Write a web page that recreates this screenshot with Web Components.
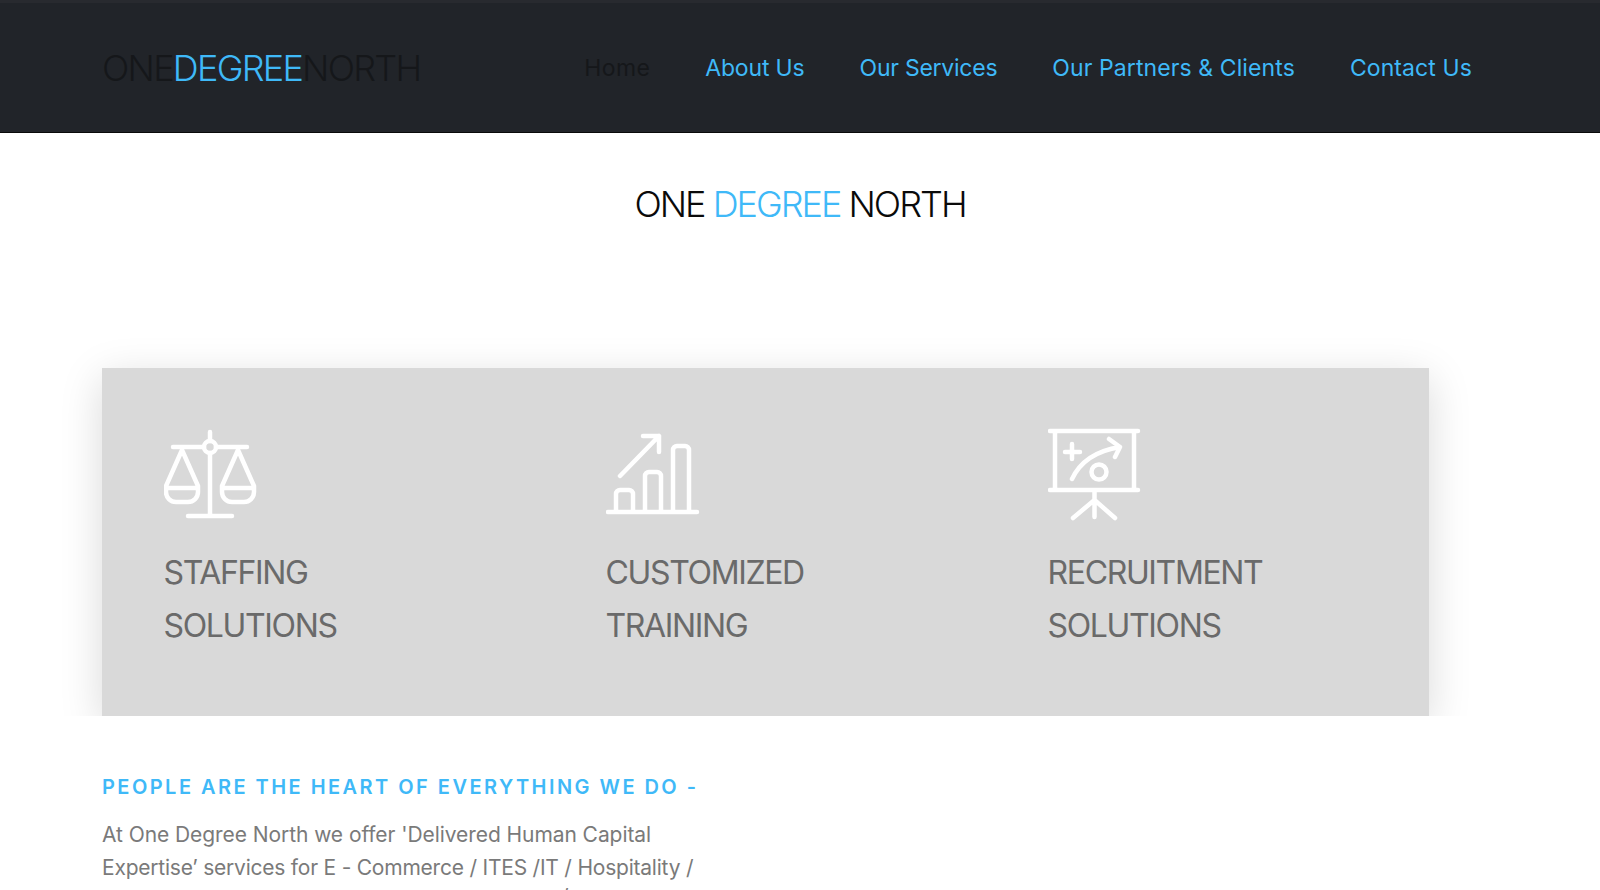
<!DOCTYPE html>
<html>
<head>
<meta charset="utf-8">
<title>One Degree North</title>
<style>
  html, body { margin: 0; height: 890px; overflow: hidden; background: #fff; }
  body { font-family: Inter, "Liberation Sans", sans-serif; }
</style>
</head>
<body>
<site-header></site-header>
<page-title></page-title>
<services-panel>
  <service-card line1="STAFFING" line2="SOLUTIONS" icon="scales"></service-card>
  <service-card line1="CUSTOMIZED" line2="TRAINING" icon="chart"></service-card>
  <service-card line1="RECRUITMENT" line2="SOLUTIONS" icon="board"></service-card>
</services-panel>
<intro-text></intro-text>

<script>
class SiteHeader extends HTMLElement {
  constructor() {
    super();
    this.attachShadow({ mode: "open" });
    this.shadowRoot.innerHTML = `
      <style>
        :host {
          display: flex;
          align-items: center;
          justify-content: space-between;
          box-sizing: border-box;
          height: 133px;
          padding: 0 128px 0 102px;
          background: #212429;
          border-top: 3px solid #282a2f;
          border-bottom: 1px solid #0a0a0a;
        }
        .logo {
          font-size: 36px;
          letter-spacing: -1.75px;
          color: #15171a;
          font-weight: 300;
        }
        .logo b { font-weight: 300; color: #3fb9f8; }
        nav { display: flex; gap: 55px; font-size: 23px; font-weight: 400; letter-spacing: .1px; }
        a { color: #3fb9f8; text-decoration: none; }
        a.current { color: #15171a; letter-spacing: .35px; }
        a.tight { letter-spacing: -.15px; }
        a.tighter { letter-spacing: -.25px; }
      </style>
      <div class="logo">ONE<b>DEGREE</b>NORTH</div>
      <nav>
        <a class="current" href="#">Home</a>
        <a class="tight" href="#">About Us</a>
        <a class="tighter" href="#">Our Services</a>
        <a href="#">Our Partners &amp; Clients</a>
        <a href="#">Contact Us</a>
      </nav>
    `;
  }
}

class PageTitle extends HTMLElement {
  constructor() {
    super();
    this.attachShadow({ mode: "open" });
    this.shadowRoot.innerHTML = `
      <style>
        :host {
          display: block;
          height: 139px;
          padding-top: 48px;
          text-align: center;
          font-size: 36px;
          font-weight: 300;
          letter-spacing: -2px;
          line-height: 46px;
          color: #0a0a0a;
        }
        span { color: #3fb9f8; }
      </style>
      ONE <span>DEGREE</span> NORTH
    `;
  }
}

class ServicesPanel extends HTMLElement {
  constructor() {
    super();
    this.attachShadow({ mode: "open" });
    this.shadowRoot.innerHTML = `
      <style>
        :host {
          display: block;
          overflow: hidden;
          padding: 48px 0 0 102px;
          height: 348px;
        }
        .box {
          display: grid;
          grid-template-columns: repeat(3, 442px);
          width: 1327px;
          height: 348px;
          box-sizing: border-box;
          padding: 52px 0 0 62px;
          background: #d9d9d9;
          box-shadow: 0 10px 40px rgba(0, 0, 0, .15);
        }
      </style>
      <div class="box"><slot></slot></div>
    `;
  }
}

// drawn on a 110x110 box, the x origin differs per icon so they line up with the card text
const ICONS = {
  scales: {
    x: 14,
    paths: `<path d="M60 12v9M60 33v63M38 96h44M23 27h31M66 27h31"/>
      <circle cx="60" cy="27" r="6"/>
      <path d="M32 30L16 66v6a10 10 0 0 0 10 10h12a10 10 0 0 0 10-10v-6L32 30M16 68h32"/>
      <path d="M88 30L72 66v6a10 10 0 0 0 10 10h12a10 10 0 0 0 10-10v-6L88 30M72 68h32"/>`
  },
  chart: {
    x: 16,
    paths: `<path d="M18 92h89M26 92V74a4 4 0 0 1 4-4h9a4 4 0 0 1 4 4v18M55 92V56a4 4 0 0 1 4-4h8a4 4 0 0 1 4 4v36M83 92V30a4 4 0 0 1 4-4h8a4 4 0 0 1 4 4v62M30 56L69 16M53 16h16v16"/>`
  },
  board: {
    x: 13,
    paths: `<path d="M15 11h88M15 70h88M20 11v59M99 11v59M59.5 70v27M59.5 80L38 98M59.5 80L80 98M37 24v15M30 32h15M37 59C45 42 60 31 85 27M74 19l11 8-5 10"/><circle cx="64" cy="52" r="7.5"/>`
  }
};

class ServiceCard extends HTMLElement {
  constructor() {
    super();
    this.attachShadow({ mode: "open" });
  }
  connectedCallback() {
    const icon = ICONS[this.getAttribute("icon")];
    this.shadowRoot.innerHTML = `
      <style>
        :host { display: block; }
        svg { display: block; fill: none; stroke: #fff; stroke-width: 4.5; stroke-linecap: round; stroke-linejoin: round; }
        h3 {
          margin: 17px 0 0 -.5px;
          font-size: 32px;
          font-weight: 400;
          line-height: 52.5px;
          letter-spacing: -1.35px;
          color: #6a6a6a;
        }
      </style>
      <svg width="110" height="110" viewBox="${icon.x} 0 110 110">${icon.paths}</svg>
      <h3>${this.getAttribute("line1")}<br>${this.getAttribute("line2")}</h3>
    `;
  }
}

class IntroText extends HTMLElement {
  constructor() {
    super();
    this.attachShadow({ mode: "open" });
    this.shadowRoot.innerHTML = `
      <style>
        :host { display: block; padding: 56px 0 0 102px; width: 640px; }
        h4 {
          margin: 0 0 17px;
          font-size: 20px;
          font-weight: 600;
          letter-spacing: 2.46px;
          line-height: 30px;
          color: #3fb9f8;
          white-space: nowrap;
        }
        p { margin: 0; font-size: 21px; line-height: 32.5px; color: #7a7a7a; white-space: nowrap; }
        .one { letter-spacing: -.07px; }
        .two { letter-spacing: -.22px; }
        .cut { padding-left: 459px; margin-top: -3px; }
      </style>
      <h4>PEOPLE ARE THE HEART OF EVERYTHING WE DO -</h4>
      <p><span class="one">At One Degree North we offer 'Delivered Human Capital</span><br><span class="two">Expertise’ services for E - Commerce / ITES /IT / Hospitality /</span></p>
      <p class="cut">/</p>
    `;
  }
}

customElements.define("site-header", SiteHeader);
customElements.define("page-title", PageTitle);
customElements.define("services-panel", ServicesPanel);
customElements.define("service-card", ServiceCard);
customElements.define("intro-text", IntroText);
</script>
</body>
</html>
